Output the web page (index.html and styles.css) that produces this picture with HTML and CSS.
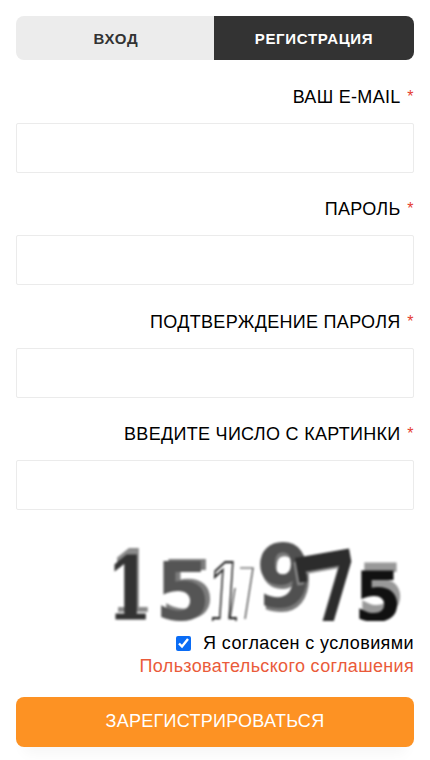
FILE: index.html
```html
<!DOCTYPE html>
<html lang="ru">
<head>
<meta charset="utf-8">
<title>Регистрация</title>
<link rel="stylesheet" href="styles.css">
</head>
<body>
<main class="page">
  <div class="tabs">
    <a class="tab tab-login">ВХОД</a>
    <a class="tab tab-active">РЕГИСТРАЦИЯ</a>
  </div>
  <form class="form">
    <div class="field">
      <label class="label">ВАШ E-MAIL<span class="req">*</span></label>
      <input class="input" type="text">
    </div>
    <div class="field">
      <label class="label">ПАРОЛЬ<span class="req">*</span></label>
      <input class="input" type="password">
    </div>
    <div class="field">
      <label class="label">ПОДТВЕРЖДЕНИЕ ПАРОЛЯ<span class="req">*</span></label>
      <input class="input" type="password">
    </div>
    <div class="field">
      <label class="label">ВВЕДИТЕ ЧИСЛО С КАРТИНКИ<span class="req">*</span></label>
      <input class="input" type="text">
    </div>
    <div class="captcha-row">
      <div class="captcha">
        <span class="d d1">1</span>
        <span class="d d2">5</span>
        <span class="d d3">1</span>
        <svg class="depth" width="40" height="64" viewBox="0 0 40 64"><path d="M20 9 L33 9 L25 60 M15 29 L10 60" fill="none" stroke="#333" stroke-width="1.2"/></svg>
        <span class="d d4">9</span>
        <span class="d d5">7</span>
        <span class="d d6">5</span>
      </div>
    </div>
    <div class="agree">
      <label class="agree-line"><input class="check" type="checkbox" checked> Я согласен с условиями</label>
      <a class="agree-link">Пользовательского соглашения</a>
    </div>
    <button class="submit" type="button">ЗАРЕГИСТРИРОВАТЬСЯ</button>
  </form>
</main>
</body>
</html>
```
FILE: styles.css
```css
* { box-sizing: border-box; }
html, body { margin: 0; padding: 0; background: #fff; height: 100%; overflow: hidden; }
body { font-family: "Liberation Sans", Arial, sans-serif; color: #000; }
.page { padding: 16px 16px 0; }
.tabs { display: flex; height: 44px; border-radius: 8px; overflow: hidden; }
.tab { display: flex; align-items: center; justify-content: center; font-size: 15px; font-weight: 700; letter-spacing: 0.7px; background: #ececec; color: #333; }
.tab-login { width: 198px; padding-left: 2px; }
.tab-active { flex: 1; background: #333; color: #fff; }
.form { display: flex; flex-direction: column; }
.field { display: flex; flex-direction: column; margin-bottom: 2.4px; }
.label { text-align: right; font-size: 18px; letter-spacing: 0.3px; line-height: 20px; height: 20px; margin: 24px 0 16px; }
.field:first-child .label { margin-top: 27px; }
.req { color: #e53d2f; font-size: 16px; line-height: 0; margin-left: 6.7px; margin-right: 0.5px; letter-spacing: 0; vertical-align: 1px; }
.input { display: block; width: 100%; height: 50px; border: 1px solid #ebebeb; border-radius: 2px; background: #fff; padding: 0 10px; outline: none; }
.captcha-row { display: flex; justify-content: flex-end; margin-top: 28px; height: 84px; }
.captcha { position: relative; width: 300px; height: 80px; overflow: hidden; filter: blur(0.8px); }
.d { position: absolute; display: block; line-height: 1; font-family: "DejaVu Sans", sans-serif; font-weight: 700; transform-origin: 0 0; }
.d1 { left: -7px; top: 5px; font-family: "DejaVu Serif", serif; font-size: 86px; color: #333; -webkit-text-stroke: 0.8px #333; text-shadow: 3px -7px 0 #8a8a8a; transform: scaleX(0.75); }
.d2 { left: 41px; top: 12px; font-size: 80px; color: #555; text-shadow: 5px -2px 0 #7c7c7c; }
.d3 { left: 96px; top: 12px; font-family: "DejaVu Serif", serif; font-size: 82px; color: transparent; -webkit-text-stroke: 2.4px #222; transform: scaleX(0.62) skewX(-6deg); }
.depth { position: absolute; left: 106px; top: 18px; }
.d4 { left: 142px; top: -8px; font-size: 88px; color: #505050; text-shadow: 2px 4px 0 #7a7a7a; transform: scaleX(0.92); }
.d5 { left: 172px; top: 7px; font-family: "DejaVu Serif", serif; font-size: 100px; color: #2c2c2c; -webkit-text-stroke: 1.5px #2c2c2c; text-shadow: -3px 3px 0 #8a8a8a; transform: rotate(-10deg); }
.d6 { left: 240px; top: 22px; font-size: 69px; color: #111; text-shadow: 3px -8px 0 #999; }
.agree { display: flex; flex-direction: column; align-items: flex-end; margin-top: 7px; font-size: 18px; line-height: 23px; }
.agree-line { display: flex; align-items: center; gap: 12px; letter-spacing: 0.4px; }
.check { width: 15px; height: 15px; margin: 0; accent-color: #0a6cf5; }
.agree-link { color: #ea5b3a; letter-spacing: 0.33px; }
.submit { display: block; width: 100%; height: 50px; margin-top: 19px; border: 0; border-radius: 8px; background: #fd9223; color: #fff; font-family: inherit; font-size: 18px; letter-spacing: 0.27px; box-shadow: 0 14px 14px -8px rgba(0,0,0,0.04); }
```
